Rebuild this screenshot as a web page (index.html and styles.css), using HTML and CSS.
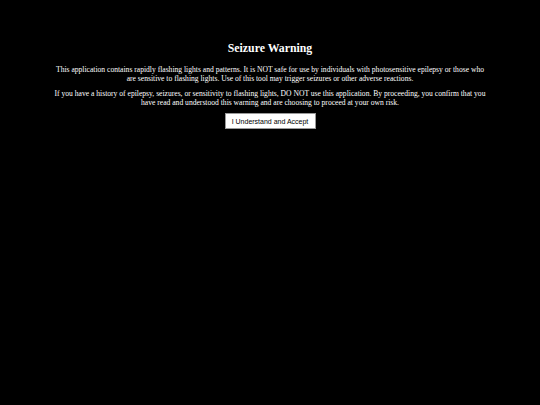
FILE: index.html
```html
<!DOCTYPE html>
<html>
<head>
<meta charset="utf-8">
<link rel="stylesheet" href="styles.css">
</head>
<body>
<div class="warning">
  <h1 class="title">Seizure Warning</h1>
  <p class="text">This application contains rapidly flashing lights and patterns. It is NOT safe for use by individuals with photosensitive epilepsy or those who are sensitive to flashing lights. Use of this tool may trigger seizures or other adverse reactions.</p>
  <p class="text">If you have a history of epilepsy, seizures, or sensitivity to flashing lights, DO NOT use this application. By proceeding, you confirm that you have read and understood this warning and are choosing to proceed at your own risk.</p>
  <button class="accept">I Understand and Accept</button>
</div>
</body>
</html>
```
FILE: styles.css
```css
html, body {
  margin: 0;
  padding: 0;
  background: #000;
  height: 100%;
}
body {
  font-family: "Liberation Serif", "Times New Roman", serif;
  color: #fff;
}
.warning {
  width: 434px;
  margin: 0 auto;
  padding-top: 41px;
  text-align: center;
}
.title {
  font-size: 11.8px;
  font-weight: bold;
  margin: 0 0 9px 0;
}
.text {
  font-size: 7.6px;
  line-height: 9px;
  margin: 0 0 6px 0;
}
.accept {
  display: block;
  margin: 3px auto 0;
  font-family: "Liberation Sans", Arial, sans-serif;
  font-size: 7px;
  background: #fff;
  color: #000;
  border: 1px solid #999;
  width: 91px;
  height: 16px;
  padding: 0;
}
```
